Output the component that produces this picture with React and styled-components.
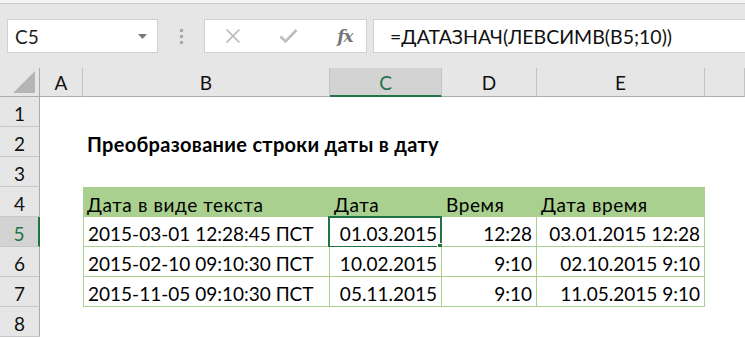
import React from "react";
import styled, { createGlobalStyle } from "styled-components";

const GlobalStyle = createGlobalStyle`
  html, body {
    margin: 0;
    padding: 0;
    background: #ffffff;
  }
  body {
    font-family: Lato, "Open Sans", sans-serif;
    color: #000;
  }
`;

const ACCENT = "#217346";
const GREEN = "#a9d08e";

const columns = ["A", "B", "C", "D", "E", ""];
const activeColumn = "C";
const activeRow = 5;

const tableRows = [
  { text: "2015-03-01 12:28:45 ПСТ", date: "01.03.2015", time: "12:28", dateTime: "03.01.2015 12:28" },
  { text: "2015-02-10 09:10:30 ПСТ", date: "10.02.2015", time: "9:10", dateTime: "02.10.2015 9:10" },
  { text: "2015-11-05 09:10:30 ПСТ", date: "05.11.2015", time: "9:10", dateTime: "11.05.2015 9:10" },
];

const Window = styled.div`
  width: 745px;
  height: 340px;
  overflow: hidden;
  display: flex;
  flex-direction: column;
`;

const TopStrip = styled.div`
  height: 3px;
  background: #f4f4f4;
  border-bottom: 1px solid #c9c9c9;
  flex-shrink: 0;
`;

// The name box / formula bar strip.
const Toolbar = styled.div`
  height: 64px;
  flex-shrink: 0;
  background: #e6e6e6;
  display: flex;
  align-items: flex-start;
  padding: 15px 0 0 7px;
  box-sizing: border-box;
`;

const NameBox = styled.div`
  width: 151px;
  height: 34px;
  box-sizing: border-box;
  background: #fff;
  border: 1px solid #d0d0d0;
  display: flex;
  align-items: center;
  justify-content: space-between;
  padding: 1px 10px 0 7px;
  font-size: 19px;
  color: #222;
`;

const Grip = styled.div`
  width: 46px;
  height: 34px;
  display: flex;
  flex-direction: column;
  align-items: center;
  justify-content: center;
  gap: 3px;
  span {
    width: 3px;
    height: 3px;
    background: #a9a9a9;
  }
`;

const FxBox = styled.div`
  width: 163px;
  height: 34px;
  box-sizing: border-box;
  background: #fff;
  border: 1px solid #d0d0d0;
  display: flex;
  align-items: center;
  padding: 0 0 0 19px;
`;

const IconSlot = styled.div`
  width: ${(p) => p.$w}px;
  display: flex;
  align-items: center;
  justify-content: center;
`;

const FxLabel = styled.span`
  font-family: "DejaVu Serif", "Liberation Serif", serif;
  font-style: italic;
  font-weight: bold;
  font-size: 17px;
  color: #767676;
  letter-spacing: -1px;
`;

const FormulaBar = styled.div`
  flex: 1;
  margin-left: 6px;
  height: 34px;
  box-sizing: border-box;
  background: #fff;
  border: 1px solid #d0d0d0;
  border-right: none;
  display: flex;
  align-items: center;
  padding: 1px 0 0 16px;
  font-size: 19.5px;
  color: #111;
`;

const Sheet = styled.div`
  display: grid;
  grid-template-columns: 40px 43px 247px 112px 95px 168px 1fr;
  grid-template-rows: 29px repeat(8, 30px);
  font-size: 19px;
`;

const Corner = styled.div`
  background: #e6e6e6;
  border-right: 1px solid #ababab;
  border-bottom: 1px solid #ababab;
  box-sizing: border-box;
  display: flex;
  align-items: flex-end;
  justify-content: flex-end;
  padding: 0 4px 3px 0;
`;

const ColHeader = styled.div`
  box-sizing: border-box;
  background: ${(p) => (p.$active ? "#d3d3d3" : "#e6e6e6")};
  color: ${(p) => (p.$active ? ACCENT : "#111")};
  border-right: 1px solid #c3c3c3;
  border-bottom: ${(p) => (p.$active ? `2px solid ${ACCENT}` : "1px solid #ababab")};
  display: flex;
  align-items: center;
  justify-content: center;
  padding-top: 1px;
`;

const RowHeader = styled.div`
  box-sizing: border-box;
  background: ${(p) => (p.$active ? "#d3d3d3" : "#e6e6e6")};
  color: ${(p) => (p.$active ? ACCENT : "#111")};
  border-right: ${(p) => (p.$active ? `2px solid ${ACCENT}` : "1px solid #ababab")};
  border-bottom: 1px solid #c8c8c8;
  display: flex;
  align-items: center;
  justify-content: center;
  padding-top: 3px;
`;

const Cell = styled.div`
  position: relative;
  box-sizing: border-box;
  display: flex;
  align-items: center;
  justify-content: ${(p) => (p.$right ? "flex-end" : "flex-start")};
  padding: 4px 4px 0 4px;
  white-space: nowrap;
  letter-spacing: ${(p) => (p.$head ? "0.6px" : "0")};
  background: ${(p) => (p.$head ? GREEN : "#fff")};
  border-bottom: ${(p) => (p.$body ? `1px solid ${GREEN}` : "none")};
  border-right: ${(p) => (p.$body ? `1px solid ${GREEN}` : "none")};
  border-left: ${(p) => (p.$first && p.$body ? `1px solid ${GREEN}` : "none")};
`;

const Title = styled(Cell)`
  font-weight: bold;
  font-size: 20px;
  letter-spacing: 0.3px;
  z-index: 1;
`;

const Selection = styled.div`
  position: absolute;
  left: -2px;
  top: -1px;
  right: -1px;
  bottom: -2px;
  border: 2px solid ${ACCENT};
  pointer-events: none;
  &::after {
    content: "";
    position: absolute;
    right: -5px;
    bottom: -5px;
    width: 6px;
    height: 6px;
    background: ${ACCENT};
    border: 1px solid #fff;
  }
`;

const Triangle = () => (
  <svg width="22" height="22" viewBox="0 0 22 22">
    <polygon points="22,0 22,22 0,22" fill="#b5b5b5" />
  </svg>
);

const DropArrow = () => (
  <svg width="9" height="5" viewBox="0 0 9 5">
    <polygon points="0,0 9,0 4.5,5" fill="#7a7a7a" />
  </svg>
);

const CrossIcon = () => (
  <svg width="16" height="16" viewBox="0 0 16 16">
    <path d="M1.5 1.5 L14.5 14.5 M14.5 1.5 L1.5 14.5" stroke="#b9b9b9" strokeWidth="1.6" fill="none" />
  </svg>
);

const CheckIcon = () => (
  <svg width="19" height="16" viewBox="0 0 19 16">
    <path d="M1.5 8.5 L6.5 13.5 L17.5 2" stroke="#bdbdbd" strokeWidth="2.6" fill="none" />
  </svg>
);

function renderRow(row) {
  const key = (c) => `${row}-${c}`;

  if (row === 2) {
    return [
      <Cell key={key("A")} />,
      <Title key={key("B")} style={{ gridColumn: "3 / span 3" }}>
        Преобразование строки даты в дату
      </Title>,
      <Cell key={key("E")} />,
      <Cell key={key("F")} />,
    ];
  }

  if (row === 4) {
    return [
      <Cell key={key("A")} />,
      ...["Дата в виде текста", "Дата", "Время", "Дата время"].map((t, i) => (
        <Cell key={key(i)} $head>
          {t}
        </Cell>
      )),
      <Cell key={key("F")} />,
    ];
  }

  if (row >= 5 && row <= 7) {
    const r = tableRows[row - 5];
    return [
      <Cell key={key("A")} />,
      <Cell key={key("B")} $body $first>
        {r.text}
      </Cell>,
      <Cell key={key("C")} $body $right>
        {r.date}
        {row === activeRow && <Selection />}
      </Cell>,
      <Cell key={key("D")} $body $right>
        {r.time}
      </Cell>,
      <Cell key={key("E")} $body $right>
        {r.dateTime}
      </Cell>,
      <Cell key={key("F")} />,
    ];
  }

  return columns.map((c, i) => <Cell key={key(i)} />);
}

const App = () => {
  const rows = [1, 2, 3, 4, 5, 6, 7, 8];
  return (
    <Window>
      <GlobalStyle />
      <TopStrip />
      <Toolbar>
        <NameBox>
          C5
          <DropArrow />
        </NameBox>
        <Grip>
          <span />
          <span />
          <span />
        </Grip>
        <FxBox>
          <IconSlot $w={18}>
            <CrossIcon />
          </IconSlot>
          <IconSlot $w={92}>
            <CheckIcon />
          </IconSlot>
          <IconSlot $w={22}>
            <FxLabel>fx</FxLabel>
          </IconSlot>
        </FxBox>
        <FormulaBar>=ДАТАЗНАЧ(ЛЕВСИМВ(B5;10))</FormulaBar>
      </Toolbar>
      <Sheet>
        <Corner>
          <Triangle />
        </Corner>
        {columns.map((c, i) => (
          <ColHeader key={`h${i}`} $active={c === activeColumn}>
            {c}
          </ColHeader>
        ))}
        {rows.map((row) => (
          <React.Fragment key={row}>
            <RowHeader $active={row === activeRow}>{row}</RowHeader>
            {renderRow(row)}
          </React.Fragment>
        ))}
      </Sheet>
    </Window>
  );
};

export default App;
